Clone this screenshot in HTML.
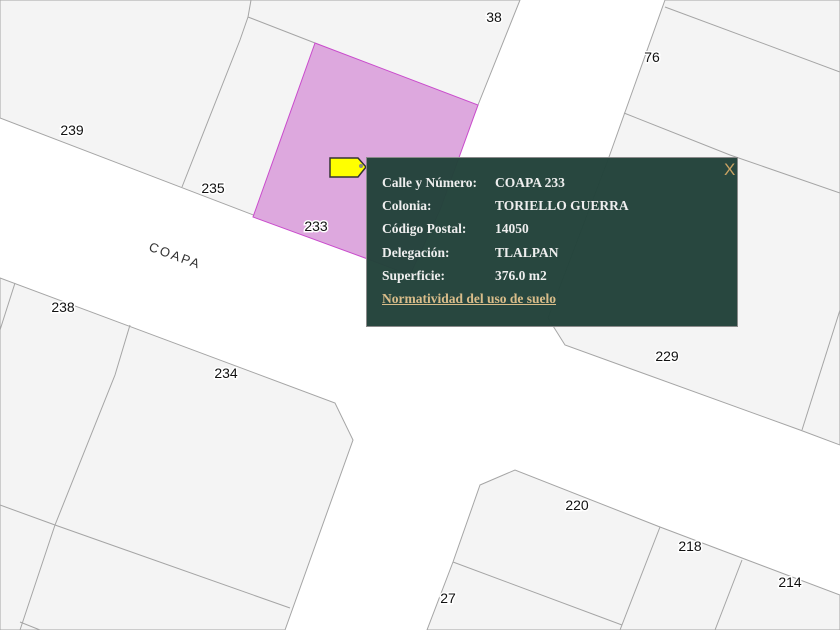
<!DOCTYPE html>
<html><head><meta charset="utf-8"><style>
body{margin:0;width:840px;height:630px;overflow:hidden;background:#fff;position:relative;font-family:"Liberation Sans",sans-serif}
svg{position:absolute;left:0;top:0}
.pop{position:absolute;left:366px;top:157px;width:370px;height:168px;background:rgba(36,67,59,0.98);border:1px solid #8a8a8a;font-family:"Liberation Serif",serif;font-weight:bold;font-size:13.5px;color:#eee;}
.row{position:absolute;left:15px;white-space:nowrap}
.row span{position:absolute;left:113px}
.x{position:absolute;left:357px;top:2px;color:#c9a263;font-family:"Liberation Sans",sans-serif;font-size:17px;font-weight:normal}
a{color:#d9bd8a;text-decoration:underline}
</style></head><body>
<svg width="840" height="630" viewBox="0 0 840 630">
<g fill="#f4f4f4" stroke="#a5a5a5" stroke-width="1">
<polygon points="0,0 520,0 478,105 430,230 410,275 0,118"/>
<polygon points="665,0 840,0 840,445 800,430 565,345 548,318 609,157"/>
<polygon points="0,278 335,403 353,440 285,630 0,630"/>
<polygon points="480,485 515,470 660,527 840,595 840,630 427,630 453,562"/>
</g>
<g fill="none" stroke="#a5a5a5" stroke-width="1">
<polyline points="251,0 248,17 315,43"/>
<polyline points="248,17 240,40 182,187"/>
<polyline points="665,7 840,72"/>
<polyline points="624,113 730,155 840,193"/>
<polyline points="840,310 802,430"/>
<polyline points="15,283 0,330"/>
<polyline points="130,325 115,375 55,525 20,630"/>
<polyline points="0,505 55,525 290,608"/>
<polyline points="20,622 40,630"/>
<polyline points="453,562 622,625"/>
<polyline points="660,527 620,630"/>
<polyline points="742,560 715,630"/>
</g>
<polygon points="315,43 478,105 440,210 410,275 365,258 253,217" fill="#dda8de" stroke="#c94bcc" stroke-width="1"/>
<g font-family="Liberation Sans,sans-serif" font-size="14" fill="#111" text-anchor="middle" stroke="#fff" stroke-width="3" paint-order="stroke">
<text x="494" y="22">38</text><text x="652" y="62">76</text><text x="72" y="135">239</text>
<text x="213" y="193">235</text><text x="316" y="231">233</text><text x="63" y="312">238</text>
<text x="226" y="378">234</text><text x="667" y="361">229</text><text x="577" y="510">220</text>
<text x="690" y="551">218</text><text x="790" y="587">214</text><text x="448" y="603">27</text>
</g>
<text x="175" y="260" font-family="Liberation Sans,sans-serif" font-size="13" fill="#333" letter-spacing="2" text-anchor="middle" transform="rotate(20 175 256)">COAPA</text>
<path d="M330,158 H358 L366,167 L358,177 H330 Z" fill="#ffff00" stroke="#333" stroke-width="1.5"/>
<circle cx="361" cy="166" r="2" fill="#888"/>
</svg>
<div class="pop">
<div class="x">X</div>
<div class="row" style="top:17px">Calle y Número:<span>COAPA 233</span></div>
<div class="row" style="top:40px">Colonia:<span>TORIELLO GUERRA</span></div>
<div class="row" style="top:63px">Código Postal:<span>14050</span></div>
<div class="row" style="top:87px">Delegación:<span>TLALPAN</span></div>
<div class="row" style="top:110px">Superficie:<span>376.0 m2</span></div>
<div class="row" style="top:133px"><a>Normatividad del uso de suelo</a></div>
</div>
</body></html>
